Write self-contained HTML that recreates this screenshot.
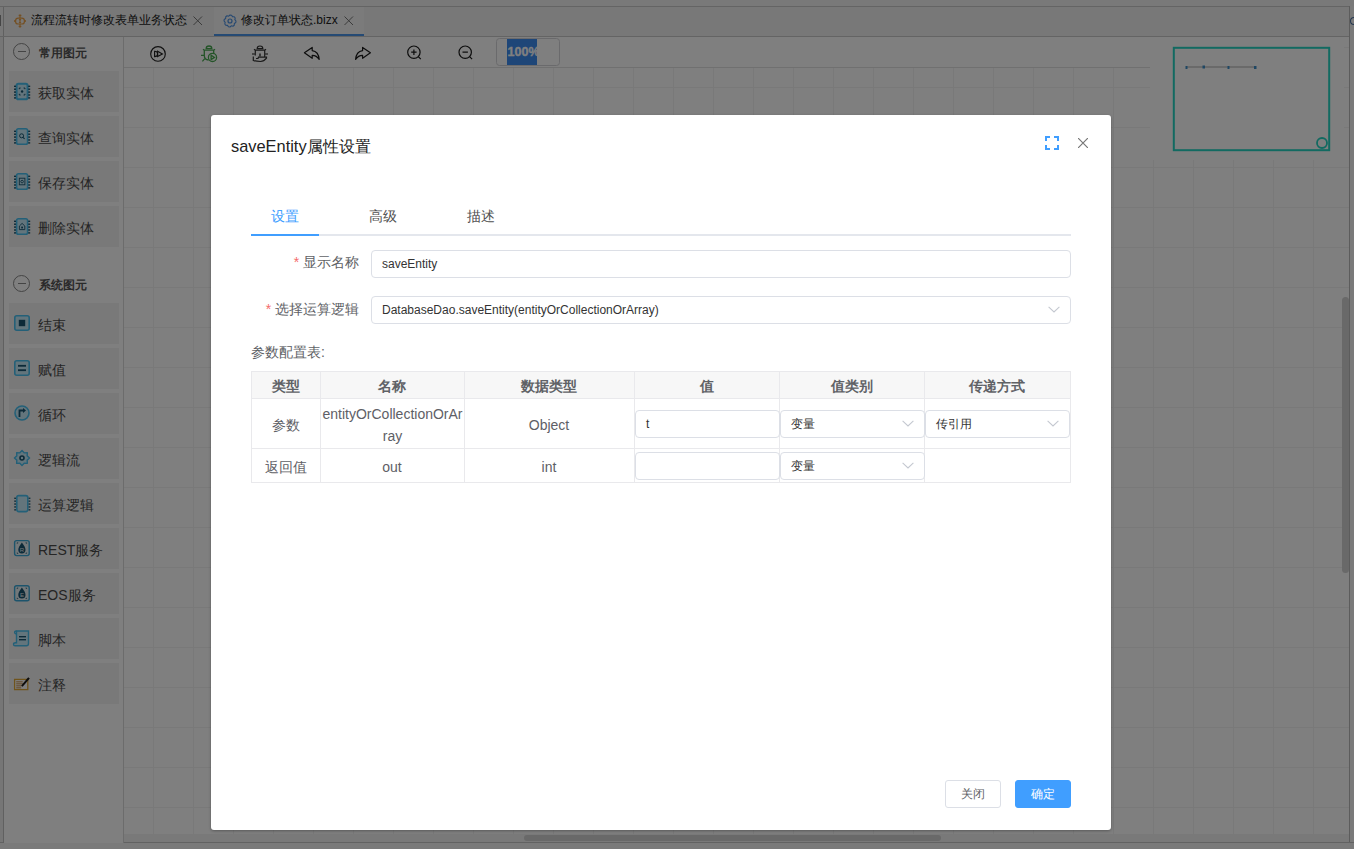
<!DOCTYPE html>
<html><head><meta charset="utf-8">
<style>
*{box-sizing:border-box}
html,body{margin:0;padding:0;width:1354px;height:849px;overflow:hidden;background:#f5f5f5;font-family:"Liberation Sans",sans-serif;color:#333}
.abs{position:absolute}
#topstrip{left:0;top:0;width:1354px;height:7px;background:#f2f2f2}
#tabbar{left:0;top:6px;width:1354px;height:31px;background:#f0f0f0;border-top:1px solid #c8c8c8;border-bottom:1px solid #c8c8c8}
.tab{top:0;height:29px;font-size:12px;line-height:26px;color:#222;white-space:nowrap}
#side{left:3px;top:37px;width:121px;height:806px;background:#fff;border-left:1px solid #c0c0c0;border-right:1px solid #d8d8d8}
.shead{position:absolute;left:0;width:118px;white-space:nowrap;height:24px;font-size:12px;font-weight:bold;color:#555;line-height:24px}
.shead .c{position:absolute;left:9.3px;top:2.4px;width:17px;height:17px;border:1px solid #888;border-radius:50%}
.shead .c:after{content:"";position:absolute;left:3.5px;top:7px;width:8px;height:1px;background:#888}
.shead span{position:absolute;left:35px;top:0}
.item{position:absolute;left:5px;width:110px;height:41px;background:#f3f3f3;font-size:14px;color:#4a4a4a;line-height:41px}
.item span{position:absolute;left:29px;top:2px}
.item svg{position:absolute;left:5px;top:12px}
#canvas{left:124px;top:37px;width:1225px;height:797px;background-color:#fff;
 background-image:linear-gradient(to right,#f2f2f2 1px,transparent 1px),linear-gradient(to bottom,#f2f2f2 1px,transparent 1px);
 background-size:40px 40px;background-position:29px 10px}
#toolbar{left:124px;top:37px;width:1026px;height:31px;background:#fff;border-bottom:1px solid #e0e0e0}
#mmwrap{left:1150px;top:37px;width:194px;height:123px;background:#fff}
#overlay{left:0;top:0;width:1354px;height:849px;background:rgba(0,0,0,0.5)}
#modal{left:211px;top:115px;width:900px;height:715px;background:#fff;border-radius:3px;box-shadow:0 1px 3px rgba(0,0,0,.3)}
.tabt{top:90px;font-size:14px;line-height:22px;color:#505050}
.lbl{font-size:14px;line-height:28px;text-align:right;color:#606266}
.lbl b{font-weight:normal;color:#f56c6c}
.inp{height:28px;border:1px solid #dcdfe6;border-radius:4px;font-size:12px;line-height:26px;padding-left:10px;color:#333;background:#fff}
.inp.sm{padding-left:10px}
.chev{position:absolute;right:10px;top:9px}
.hl{left:0;width:820px;height:1px;background:#e9e9ec}
.vl{top:0;width:1px;height:112px;background:#e9e9ec}
.th{background:#f7f7f7}
.hc{top:2px;height:27px;line-height:27px;text-align:center;font-size:14px;font-weight:bold;color:#606266}
.td{text-align:center;font-size:14px;white-space:nowrap;color:#5e6066;margin-top:2px}
.btn{border:1px solid #dcdfe6;border-radius:3px;font-size:12px;line-height:26px;text-align:center;color:#606266;background:#fff}
.btn.pri{background:#409eff;border-color:#409eff;color:#fff}
</style></head><body>
<div class="abs" id="topstrip"></div>
<div class="abs" id="tabbar"><div class="abs" style="left:3px;top:0;width:1px;height:29px;background:#c0c0c0"></div><div class="abs" style="left:-2px;top:8px;width:3.2px;height:10.5px;background:#8a8a8a"></div>
 <div class="abs tab" style="left:10px;width:202px">
   <span class="abs" style="left:21px;top:0">流程流转时修改表单业务状态</span>
   
 </div>
 <div class="abs tab" style="left:214px;width:150px;background:#f7f7f7;border-bottom:2px solid #4a94e8">
   <span class="abs" style="left:27px;top:0">修改订单状态.bizx</span>
   
 </div>
</div>
<div class="abs" id="canvas"></div>
<div class="abs" id="toolbar"></div>
<div class="abs" style="left:0;top:37px;width:3px;height:806px;background:#ececec"></div>
<div class="abs" style="left:1349px;top:6px;width:1px;height:836px;background:#b8b8b8"></div>
<div class="abs" style="left:1350px;top:6px;width:4px;height:837px;background:#f4f4f4"></div>
<div class="abs" style="left:1350px;top:17px;width:4px;height:8px;border:1.5px solid #4a6fa0;border-right:none;border-radius:4px 0 0 4px"></div>
<div class="abs" style="left:124px;top:834px;width:1225px;height:8px;background:#f2f2f2"></div>
<div class="abs" style="left:524px;top:835px;width:417px;height:6px;background:#d2d2d2;border-radius:3px"></div>
<div class="abs" style="left:1342px;top:297px;width:7px;height:276px;background:#d2d2d2;border-radius:3.5px"></div>
<div class="abs" style="left:0;top:842px;width:1354px;height:1px;background:#c4c4c4"></div>
<div class="abs" style="left:0;top:843px;width:1354px;height:6px;background:#f4f4f4"></div>

<div class="abs" id="mmwrap"></div>
<div class="abs" id="side">
 <div class="shead" style="top:4px"><div class="c"></div><span>常用图元</span></div>
 <div class="item" style="top:34px"><span>获取实体</span></div>
 <div class="item" style="top:79px"><span>查询实体</span></div>
 <div class="item" style="top:124px"><span>保存实体</span></div>
 <div class="item" style="top:169px"><span>删除实体</span></div>
 <div class="shead" style="top:236px"><div class="c"></div><span>系统图元</span></div>
 <div class="item" style="top:266px"><span>结束</span></div>
 <div class="item" style="top:311px"><span>赋值</span></div>
 <div class="item" style="top:356px"><span>循环</span></div>
 <div class="item" style="top:401px"><span>逻辑流</span></div>
 <div class="item" style="top:446px"><span>运算逻辑</span></div>
 <div class="item" style="top:491px"><span>REST服务</span></div>
 <div class="item" style="top:536px"><span>EOS服务</span></div>
 <div class="item" style="top:581px"><span>脚本</span></div>
 <div class="item" style="top:626px"><span>注释</span></div>
</div>
<svg class="abs" style="left:0;top:0" width="1354" height="849"><g transform="translate(14,83)"><rect x="2.6" y="0.8" width="11" height="15.4" rx="1.8" fill="#c6eaf8" stroke="#48c0f0" stroke-width="2"/><rect x="0" y="2.6" width="2" height="1.4" fill="#1a5570"/><rect x="14.2" y="2.6" width="2" height="1.4" fill="#1a5570"/><rect x="0" y="5.5" width="2" height="1.4" fill="#1a5570"/><rect x="14.2" y="5.5" width="2" height="1.4" fill="#1a5570"/><rect x="0" y="8.4" width="2" height="1.4" fill="#1a5570"/><rect x="14.2" y="8.4" width="2" height="1.4" fill="#1a5570"/><rect x="0" y="11.299999999999999" width="2" height="1.4" fill="#1a5570"/><rect x="14.2" y="11.299999999999999" width="2" height="1.4" fill="#1a5570"/><rect x="0" y="14.2" width="2" height="1.4" fill="#1a5570"/><rect x="14.2" y="14.2" width="2" height="1.4" fill="#1a5570"/><path d="M5.3 6.2V5H6.6M9.6 5H10.9V6.2M10.9 10.8V12H9.6M6.6 12H5.3V10.8" fill="none" stroke="#1a5570" stroke-width="1"/><circle cx="8.1" cy="8.5" r="1.2" fill="#1a5570"/></g><g transform="translate(14,128)"><rect x="2.6" y="0.8" width="11" height="15.4" rx="1.8" fill="#c6eaf8" stroke="#48c0f0" stroke-width="1.6"/><rect x="0" y="2.6" width="2" height="1.4" fill="#1a5570"/><rect x="14.2" y="2.6" width="2" height="1.4" fill="#1a5570"/><rect x="0" y="5.5" width="2" height="1.4" fill="#1a5570"/><rect x="14.2" y="5.5" width="2" height="1.4" fill="#1a5570"/><rect x="0" y="8.4" width="2" height="1.4" fill="#1a5570"/><rect x="14.2" y="8.4" width="2" height="1.4" fill="#1a5570"/><rect x="0" y="11.299999999999999" width="2" height="1.4" fill="#1a5570"/><rect x="14.2" y="11.299999999999999" width="2" height="1.4" fill="#1a5570"/><rect x="0" y="14.2" width="2" height="1.4" fill="#1a5570"/><rect x="14.2" y="14.2" width="2" height="1.4" fill="#1a5570"/><circle cx="7.6" cy="7.8" r="2" fill="none" stroke="#1a5570" stroke-width="1"/><path d="M9 9.3L10.6 10.9" stroke="#1a5570" stroke-width="1.1"/></g><g transform="translate(14,173)"><rect x="2.6" y="0.8" width="11" height="15.4" rx="1.8" fill="#c6eaf8" stroke="#48c0f0" stroke-width="1.6"/><rect x="0" y="2.6" width="2" height="1.4" fill="#1a5570"/><rect x="14.2" y="2.6" width="2" height="1.4" fill="#1a5570"/><rect x="0" y="5.5" width="2" height="1.4" fill="#1a5570"/><rect x="14.2" y="5.5" width="2" height="1.4" fill="#1a5570"/><rect x="0" y="8.4" width="2" height="1.4" fill="#1a5570"/><rect x="14.2" y="8.4" width="2" height="1.4" fill="#1a5570"/><rect x="0" y="11.299999999999999" width="2" height="1.4" fill="#1a5570"/><rect x="14.2" y="11.299999999999999" width="2" height="1.4" fill="#1a5570"/><rect x="0" y="14.2" width="2" height="1.4" fill="#1a5570"/><rect x="14.2" y="14.2" width="2" height="1.4" fill="#1a5570"/><rect x="5.3" y="5.2" width="5.6" height="6.6" fill="none" stroke="#1a5570" stroke-width="0.9"/><circle cx="8.1" cy="8.6" r="1.3" fill="none" stroke="#1a5570" stroke-width="0.9"/></g><g transform="translate(14,218)"><rect x="2.6" y="0.8" width="11" height="15.4" rx="1.8" fill="#c6eaf8" stroke="#48c0f0" stroke-width="1.6"/><rect x="0" y="2.6" width="2" height="1.4" fill="#1a5570"/><rect x="14.2" y="2.6" width="2" height="1.4" fill="#1a5570"/><rect x="0" y="5.5" width="2" height="1.4" fill="#1a5570"/><rect x="14.2" y="5.5" width="2" height="1.4" fill="#1a5570"/><rect x="0" y="8.4" width="2" height="1.4" fill="#1a5570"/><rect x="14.2" y="8.4" width="2" height="1.4" fill="#1a5570"/><rect x="0" y="11.299999999999999" width="2" height="1.4" fill="#1a5570"/><rect x="14.2" y="11.299999999999999" width="2" height="1.4" fill="#1a5570"/><rect x="0" y="14.2" width="2" height="1.4" fill="#1a5570"/><rect x="14.2" y="14.2" width="2" height="1.4" fill="#1a5570"/><path d="M5.4 11.6V8L8.1 5.4L10.8 8V11.6Z" fill="none" stroke="#1a5570" stroke-width="0.9"/><rect x="7.2" y="8.6" width="1.8" height="1.8" fill="#1a5570"/></g><rect x="14.8" y="315.8" width="14.4" height="14.4" rx="2" fill="#c6eaf8" stroke="#48c0f0" stroke-width="1.6"/><rect x="18.8" y="319.8" width="6.4" height="6.4" fill="#1a5570"/><rect x="14.8" y="360.8" width="14.4" height="14.4" rx="2" fill="#c6eaf8" stroke="#48c0f0" stroke-width="1.6"/><rect x="18" y="364.9" width="8" height="1.8" fill="#1a5570"/><rect x="18" y="369.3" width="8" height="1.8" fill="#1a5570"/><circle cx="22" cy="413" r="7" fill="#c6eaf8" stroke="#48c0f0" stroke-width="1.6"/><path d="M19.5 417V410.5H23.5" fill="none" stroke="#1a5570" stroke-width="1.8"/><path d="M23 408L26 410.5L23 413Z" fill="#1a5570"/><polygon points="29.60,458.00 27.17,460.14 27.37,463.37 24.14,463.17 22.00,465.60 19.86,463.17 16.63,463.37 16.83,460.14 14.40,458.00 16.83,455.86 16.63,452.63 19.86,452.83 22.00,450.40 24.14,452.83 27.37,452.63 27.17,455.86" fill="#c6eaf8" stroke="#48c0f0" stroke-width="1.4" stroke-linejoin="round"/><circle cx="22" cy="458" r="2" fill="none" stroke="#1a5570" stroke-width="1.6"/><rect x="16.8" y="495.6" width="11" height="16" rx="2" fill="#c6eaf8" stroke="#48c0f0" stroke-width="1.6"/><rect x="14.2" y="497.6" width="1.8" height="1.3" fill="#1a5570"/><rect x="28.6" y="497.6" width="1.8" height="1.3" fill="#1a5570"/><rect x="14.2" y="500.5" width="1.8" height="1.3" fill="#1a5570"/><rect x="28.6" y="500.5" width="1.8" height="1.3" fill="#1a5570"/><rect x="14.2" y="503.40000000000003" width="1.8" height="1.3" fill="#1a5570"/><rect x="28.6" y="503.40000000000003" width="1.8" height="1.3" fill="#1a5570"/><rect x="14.2" y="506.3" width="1.8" height="1.3" fill="#1a5570"/><rect x="28.6" y="506.3" width="1.8" height="1.3" fill="#1a5570"/><rect x="14.2" y="509.20000000000005" width="1.8" height="1.3" fill="#1a5570"/><rect x="28.6" y="509.20000000000005" width="1.8" height="1.3" fill="#1a5570"/><rect x="14.6" y="540.6" width="14.6" height="15" rx="2" fill="#e6f0f4" stroke="#3aa8d8" stroke-width="1.4"/><path d="M17.2 543.6V542.8000000000001H18.2M17.2 552.6V553.4H18.2M26.6 543.6V542.8000000000001H25.6M26.6 552.6V553.4H25.6" fill="none" stroke="#1a5570" stroke-width="0.8"/><path d="M21.9 542.4C19.6 545.6 18.3 547.6 18.3 549.8000000000001A3.6 3.6 0 0 0 25.5 549.8000000000001C25.5 547.6 24.2 545.6 21.9 542.4Z" fill="#1a5570"/><text x="21.9" y="552.2" font-size="6" font-family="Liberation Sans" fill="#e6f0f4" text-anchor="middle">R</text><rect x="14.6" y="585.8" width="14.6" height="15" rx="2" fill="#e6f0f4" stroke="#3aa8d8" stroke-width="1.4"/><path d="M17.2 588.8V588.0H18.2M17.2 597.8V598.5999999999999H18.2M26.6 588.8V588.0H25.6M26.6 597.8V598.5999999999999H25.6" fill="none" stroke="#1a5570" stroke-width="0.8"/><path d="M21.9 587.5999999999999C19.6 590.8 18.3 592.8 18.3 595.0A3.6 3.6 0 0 0 25.5 595.0C25.5 592.8 24.2 590.8 21.9 587.5999999999999Z" fill="#1a5570"/><text x="21.9" y="597.4" font-size="6" font-family="Liberation Sans" fill="#e6f0f4" text-anchor="middle">E</text><path d="M16.5 631H28.5V643.5Q28.5 645.8 26.5 645.8H15Q13.5 645.8 13.5 644.2Q13.5 642.8 15.5 642.8H16.5Z" fill="#c6eaf8" stroke="#48c0f0" stroke-width="1.4"/><path d="M16.5 631Q14.6 631 14.6 632.6Q14.6 634 16.5 634" fill="none" stroke="#48c0f0" stroke-width="1.4"/><rect x="19" y="636" width="7" height="1.4" fill="#1a5570"/><rect x="19" y="639" width="7" height="1.4" fill="#1a5570"/><rect x="14.6" y="679.4" width="13.2" height="10.2" fill="#fff" stroke="#e0a838" stroke-width="1.3"/><rect x="16.2" y="681.4" width="6.5" height="0.9" fill="#c08030"/><rect x="16.2" y="683.4" width="7" height="0.9" fill="#c08030"/><rect x="16.2" y="685.4" width="5.5" height="0.9" fill="#c08030"/><rect x="16.2" y="687.4" width="5" height="0.9" fill="#c08030"/><path d="M21.2 685.6L28.2 677.2L29.8 678.6L22.6 686.8Z" fill="#1a1a1a"/><g fill="none" stroke="#e8a048" stroke-width="1.2"><rect x="15.6" y="18.2" width="8.8" height="5.8" rx="2.6"/><path d="M20 16.5V18.2M20 24V25.5M20 19.6V22.6M18.9 19.6H21.1M18.9 22.6H21.1"/></g><rect x="18.6" y="14.6" width="2.8" height="2" rx="0.8" fill="#e8a048"/><rect x="18.6" y="25.4" width="2.8" height="2" rx="0.8" fill="#e8a048"/><rect x="14" y="20.1" width="2" height="2" rx="0.8" fill="#e8a048"/><rect x="24" y="20.1" width="2" height="2" rx="0.8" fill="#e8a048"/><polygon points="230.00,15.00 231.55,15.20 232.50,16.67 234.24,16.76 235.20,18.00 234.83,19.71 236.00,21.00 235.80,22.55 234.33,23.50 234.24,25.24 233.00,26.20 231.29,25.83 230.00,27.00 228.45,26.80 227.50,25.33 225.76,25.24 224.80,24.00 225.17,22.29 224.00,21.00 224.20,19.45 225.67,18.50 225.76,16.76 227.00,15.80 228.71,16.17" fill="none" stroke="#4a90e2" stroke-width="1.1" stroke-linejoin="round"/><circle cx="230" cy="21" r="2" fill="none" stroke="#4a90e2" stroke-width="1.2"/><path d="M193.5 16.5L202 25M202 16.5L193.5 25M344.5 16.5L353 25M353 16.5L344.5 25" stroke="#777" stroke-width="1"/><g fill="none" stroke="#222" stroke-width="1.15"><circle cx="158" cy="53.9" r="7.3"/><path d="M154.6 51.2V56.6Q157.6 56.6 157.6 53.9Q157.6 51.2 154.6 51.2Z"/><path d="M157.6 51.2V56.6L162.4 53.9Z"/></g><g fill="none" stroke="#48a850" stroke-width="1.3"><path d="M206.2 48.6Q206.2 46 209 46Q211.8 46 211.8 48.6Z" /><path d="M204.3 50.2H213.7V53.5M204.3 50.2V55.5Q204.3 59.6 208.6 60M201 55.4H204.3M202.4 61.4L205 58.4M203 49.2L204.3 50.2M215 49.2L213.7 50.2"/><circle cx="212.5" cy="57.4" r="4.1" fill="#fff"/><path d="M211.1 55.2V59.6L214.5 57.4Z"/></g><g fill="none" stroke="#333" stroke-width="1.2"><path d="M257.2 48.6Q257.2 46 260 46Q262.8 46 262.8 48.6Z"/><path d="M255.3 55.5V50.2H264.7V57M254 49.2L255.3 50.2M266 49.2L264.7 50.2"/><path d="M260 53.5V56.5" stroke-width="1.4"/><path d="M253.3 56.5V60.5Q256 61.5 260.5 61.5Q264 61.5 266.5 58.2V57.2H258.5L258 58.5H256"/></g><path d="M252 54H255.3M264.7 54H268" stroke="#666" stroke-width="1.3"/><g fill="none" stroke="#1a1a1a" stroke-width="1.2" stroke-linejoin="round"><path d="M304.4 52.8L312.2 47.4V50.6Q318.6 51.6 319.2 59.4Q316.5 55.2 312.2 55.3V58.3Z"/><path d="M370.4 52.8L362.6 47.4V50.6Q356.2 51.6 355.6 59.4Q358.3 55.2 362.6 55.3V58.3Z"/></g><g fill="none" stroke="#1a1a1a" stroke-width="1.2"><circle cx="413.9" cy="52.2" r="6.2"/><path d="M418.3 56.6L420.8 59.1M411.2 52.2H416.6M413.9 49.5V54.9"/><circle cx="465.2" cy="52.2" r="6.2"/><path d="M469.6 56.6L472.1 59.1M462.5 52.2H467.9"/></g><rect x="496.5" y="38.5" width="63" height="27" rx="3" fill="#fff" stroke="#d4d4d8"/><rect x="507" y="39" width="30" height="26" fill="#3d8cf0"/><svg x="507" y="39" width="30" height="26"><text x="0.6" y="17" style="font-family:'Liberation Sans';font-size:12.5px;font-weight:700" fill="#fff" stroke="#fff" stroke-width="0.35">100%</text></svg><rect x="1173.8" y="47.8" width="155.4" height="102.4" fill="none" stroke="#24d4c2" stroke-width="2"/><circle cx="1322" cy="143" r="5" fill="none" stroke="#24d4c2" stroke-width="1.8"/><path d="M1186 67H1256" stroke="#aaa" stroke-width="1"/><rect x="1185.5" y="66" width="2" height="3" fill="#3f8fc8"/><rect x="1202.5" y="65.5" width="2.5" height="3" fill="#3f8fc8"/><rect x="1227.5" y="66" width="2" height="3" fill="#3f8fc8"/><rect x="1254" y="66" width="2.5" height="3" fill="#3f8fc8"/></svg>
<div class="abs" id="overlay"></div>
<div class="abs" id="modal">
 <div class="abs" style="left:20px;top:19px;font-size:16.4px;line-height:24px;color:#222">saveEntity属性设置</div>
 <svg class="abs" style="left:834px;top:21px" width="14" height="14" viewBox="0 0 14 14" fill="none" stroke="#409eff" stroke-width="2"><path d="M1 5V1H5M9 1H13V5M13 9V13H9M5 13H1V9"/></svg>
 <svg class="abs" style="left:867px;top:23px" width="10" height="10" viewBox="0 0 10 10" stroke="#777" stroke-width="1.2"><path d="M0 0L10 10M10 0L0 10"/></svg>
 <div class="abs" style="left:40px;top:119px;width:820px;height:2px;background:#e4e7ed"></div>
 <div class="abs" style="left:40px;top:119px;width:68px;height:2px;background:#409eff"></div>
 <div class="abs tabt" style="left:60px;color:#409eff">设置</div>
 <div class="abs tabt" style="left:158px">高级</div>
 <div class="abs tabt" style="left:256px">描述</div>
 <div class="abs lbl" style="left:40px;top:133px;width:108px"><b>*</b> 显示名称</div>
 <div class="abs inp" style="left:160px;top:135px;width:700px">saveEntity</div>
 <div class="abs lbl" style="left:40px;top:180px;width:108px"><b>*</b> 选择运算逻辑</div>
 <div class="abs inp" style="left:160px;top:181px;width:700px">DatabaseDao.saveEntity(entityOrCollectionOrArray)<svg class="chev" width="12" height="7" viewBox="0 0 12 7"><path d="M0.6 0.8L6 6L11.4 0.8" fill="none" stroke="#c4c8d0" stroke-width="1.1"/></svg></div>
 <div class="abs" style="left:40px;top:226px;font-size:14px;line-height:22px;color:#606266">参数配置表:</div>
 <div class="abs" id="tbl" style="left:40px;top:256px;width:820px;height:112px">
  <div class="abs th" style="left:0;top:0;width:820px;height:27px"></div>
  <div class="abs hl" style="top:0"></div>
  <div class="abs hl" style="top:27px"></div>
  <div class="abs hl" style="top:77px"></div>
  <div class="abs hl" style="top:111px"></div>
  <div class="abs vl" style="left:0"></div>
  <div class="abs vl" style="left:69px"></div>
  <div class="abs vl" style="left:213px"></div>
  <div class="abs vl" style="left:383px"></div>
  <div class="abs vl" style="left:528px"></div>
  <div class="abs vl" style="left:673px"></div>
  <div class="abs vl" style="left:819px"></div>
  <div class="abs hc" style="left:0;width:69px">类型</div>
  <div class="abs hc" style="left:69px;width:144px">名称</div>
  <div class="abs hc" style="left:213px;width:170px">数据类型</div>
  <div class="abs hc" style="left:383px;width:145px">值</div>
  <div class="abs hc" style="left:528px;width:145px">值类别</div>
  <div class="abs hc" style="left:673px;width:146px">传递方式</div>
  <div class="abs td" style="left:0;top:27px;width:69px;height:50px;line-height:50px">参数</div>
  <div class="abs td" style="left:70px;top:27px;width:143px;height:50px;padding-top:3px;line-height:22px;">entityOrCollectionOrAr<br>ray</div>
  <div class="abs td" style="left:213px;top:27px;width:170px;height:50px;line-height:50px">Object</div>
  <div class="abs inp sm" style="left:384px;top:39px;width:145px">t</div>
  <div class="abs inp sm" style="left:529px;top:39px;width:145px">变量<svg class="chev" width="12" height="7" viewBox="0 0 12 7"><path d="M0.6 0.8L6 6L11.4 0.8" fill="none" stroke="#c4c8d0" stroke-width="1.1"/></svg></div>
  <div class="abs inp sm" style="left:674px;top:39px;width:145px">传引用<svg class="chev" width="12" height="7" viewBox="0 0 12 7"><path d="M0.6 0.8L6 6L11.4 0.8" fill="none" stroke="#c4c8d0" stroke-width="1.1"/></svg></div>
  <div class="abs td" style="left:0;top:77px;width:69px;height:34px;line-height:34px">返回值</div>
  <div class="abs td" style="left:69px;top:77px;width:144px;height:34px;line-height:34px">out</div>
  <div class="abs td" style="left:213px;top:77px;width:170px;height:34px;line-height:34px">int</div>
  <div class="abs inp sm" style="left:384px;top:81px;width:145px"></div>
  <div class="abs inp sm" style="left:529px;top:81px;width:145px">变量<svg class="chev" width="12" height="7" viewBox="0 0 12 7"><path d="M0.6 0.8L6 6L11.4 0.8" fill="none" stroke="#c4c8d0" stroke-width="1.1"/></svg></div>
 </div>
 <div class="abs btn" style="left:734px;top:665px;width:56px;height:28px">关闭</div>
 <div class="abs btn pri" style="left:804px;top:665px;width:56px;height:28px">确定</div>
</div>
</body></html>
